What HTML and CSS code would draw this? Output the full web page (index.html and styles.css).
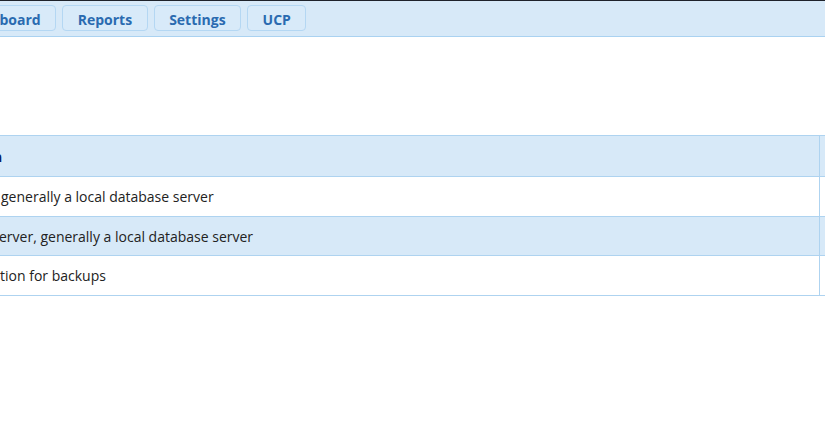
FILE: index.html
```html
<!DOCTYPE html>
<html>
<head>
<meta charset="utf-8">
<link rel="stylesheet" href="styles.css">
</head>
<body>
<div class="topbar">
  <nav class="tabs">
    <a class="tab tab-first">Dashboard</a>
    <a class="tab">Reports</a>
    <a class="tab">Settings</a>
    <a class="tab">UCP</a>
  </nav>
</div>
<main class="content">
  <table class="grid">
    <thead>
      <tr><th class="desc"><span class="cut-head">n</span></th><th class="rest"></th></tr>
    </thead>
    <tbody>
      <tr class="r1"><td class="desc"><span class="cut c1">generally a local database server</span></td><td class="rest"></td></tr>
      <tr class="alt r2"><td class="desc"><span class="cut c2">erver, generally a local database server</span></td><td class="rest"></td></tr>
      <tr class="r3"><td class="desc"><span class="cut c3">tion for backups</span></td><td class="rest"></td></tr>
    </tbody>
  </table>
</main>
</body>
</html>
```
FILE: styles.css
```css
html, body {
  margin: 0;
  padding: 0;
  background: #ffffff;
  overflow: hidden;
  font-family: "Open Sans", "Noto Sans", sans-serif;
}
.topbar {
  border-top: 1px solid #1e222b;
  background: #d7e9f8;
  border-bottom: 1px solid #aad2f1;
  box-sizing: border-box;
  height: 37px;
}
.tabs {
  display: flex;
  gap: 6px;
  padding-top: 4px;
}
.tab {
  display: block;
  box-sizing: border-box;
  height: 26px;
  line-height: 23px;
  padding: 2px 14.5px 0;
  border: 1px solid #b4d7f3;
  border-radius: 4px;
  background: #d8eaf9;
  color: #2a6ab0;
  font-weight: 700;
  font-size: 14px;
}
.tab-first {
  margin-left: -51px;
}
.content {
  padding-top: 98px;
}
.grid {
  border-collapse: collapse;
  margin-left: -1px;
  width: 860px;
  table-layout: fixed;
}
.grid th, .grid td {
  border: 1px solid #aed3f0;
  padding: 0;
  text-align: left;
  font-size: 14px;
  color: #222222;
  font-weight: 400;
  white-space: nowrap;
  overflow: hidden;
}
.grid th.desc, .grid td.desc {
  width: 820px;
  border-left: none;
}
.grid thead tr {
  background: #d7e9f8;
  height: 41px;
}
.grid tbody tr.r1 { height: 40px; }
.grid tbody tr.r2 { height: 39px; }
.grid tbody tr.r3 { height: 40px; }
.grid tr.alt {
  background: #d7e9f8;
}
.cut-head {
  display: inline-block;
  margin-left: -6px;
  font-weight: 700;
  color: #0b1f66;
}
.cut { display: inline-block; }
.c1 { margin-left: 2px; }
.c2 { margin-left: 0; }
.c3 { margin-left: 1px; }
```
